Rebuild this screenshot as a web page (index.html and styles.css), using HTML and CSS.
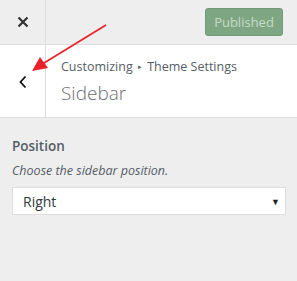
FILE: index.html
```html
<html>

<head>
    <title>Customize: Sidebar</title>
    <link rel="stylesheet" href="styles.css">
</head>

<body>
    <div class="top-bar">
        <div class="close-btn">
            <svg width="12" height="12" viewBox="0 0 12 12">
                <path d="M1.5 1.5 L10.5 10.5 M10.5 1.5 L1.5 10.5" stroke="#333" stroke-width="2.2" />
            </svg>
        </div>
        <div class="top-actions">
            <button class="publish-btn">Published</button>
        </div>
    </div>

    <div class="section-header">
        <div class="back-btn">
            <svg width="10" height="14" viewBox="0 0 10 14">
                <path d="M7.5 1.5 L2.5 7 L7.5 12.5" fill="none" stroke="#111" stroke-width="1.8" />
            </svg>
        </div>
        <div class="section-title">
            <div class="breadcrumb">Customizing <span class="sep">▸</span> Theme Settings</div>
            <div class="title">Sidebar</div>
        </div>
    </div>

    <div class="controls">
        <div class="control-label">Position</div>
        <div class="control-desc">Choose the sidebar position.</div>
        <div class="select-box">
            <span class="select-value">Right</span>
            <span class="caret">▼</span>
        </div>
    </div>

    <!-- Annotation arrow -->
    <svg class="annotation" width="297" height="281" viewBox="0 0 297 281">
        <line x1="106" y1="25" x2="44" y2="63" stroke="#e8202a" stroke-width="1.6" />
        <polygon points="32,71 40,57 48,68" fill="#e8202a" />
    </svg>
</body>

</html>
```

FILE: styles.css
```css
body {
    margin: 0;
    background: #eeeeee;
    font-family: 'Open Sans', 'Liberation Sans', sans-serif;
    color: #555d66;
    width: 297px;
    height: 281px;
    overflow: hidden;
    position: relative;
}

.top-bar {
    display: flex;
    height: 44px;
    border-bottom: 1px solid #dddddd;
    background: #eeeeee;
}

.close-btn {
    width: 45px;
    border-right: 1px solid #dddddd;
    display: flex;
    align-items: center;
    justify-content: center;
}

.top-actions {
    flex: 1;
    display: flex;
    justify-content: flex-end;
    align-items: center;
    padding-right: 14px;
}

.publish-btn {
    width: 78px;
    height: 28px;
    background: #7fa682;
    border: 1px solid #729a76;
    border-radius: 3px;
    color: #c6dcc6;
    font-family: inherit;
    font-size: 13px;
    padding: 0;
}

.section-header {
    display: flex;
    height: 72px;
    background: #ffffff;
    border-bottom: 1px solid #dddddd;
}

.back-btn {
    width: 45px;
    border-right: 1px solid #dddddd;
    display: flex;
    align-items: center;
    justify-content: center;
    padding-top: 2px;
}

.section-title {
    padding: 12px 0 0 15px;
}

.breadcrumb {
    font-size: 12.5px;
    line-height: 20px;
}

.breadcrumb .sep {
    font-size: 7px;
    vertical-align: 2px;
    margin: 0 2px;
}

.title {
    font-size: 19px;
    font-weight: 300;
    color: #6b7075;
    line-height: 28px;
    margin-top: 2px;
}

.controls {
    padding: 18px 11px 0 12px;
}

.control-label {
    font-size: 13.5px;
    font-weight: 600;
    line-height: 20px;
}

.control-desc {
    font-size: 12.5px;
    font-style: italic;
    line-height: 18px;
    margin-top: 6px;
}

.select-box {
    margin-top: 7px;
    height: 26px;
    background: #ffffff;
    border: 1px solid #dddddd;
    display: flex;
    align-items: center;
    justify-content: space-between;
    font-size: 14px;
    color: #32373c;
}

.select-value {
    padding-left: 10px;
}

.caret {
    font-size: 9px;
    color: #222;
    padding-right: 5px;
}

.annotation {
    position: absolute;
    left: 0;
    top: 0;
}
```
